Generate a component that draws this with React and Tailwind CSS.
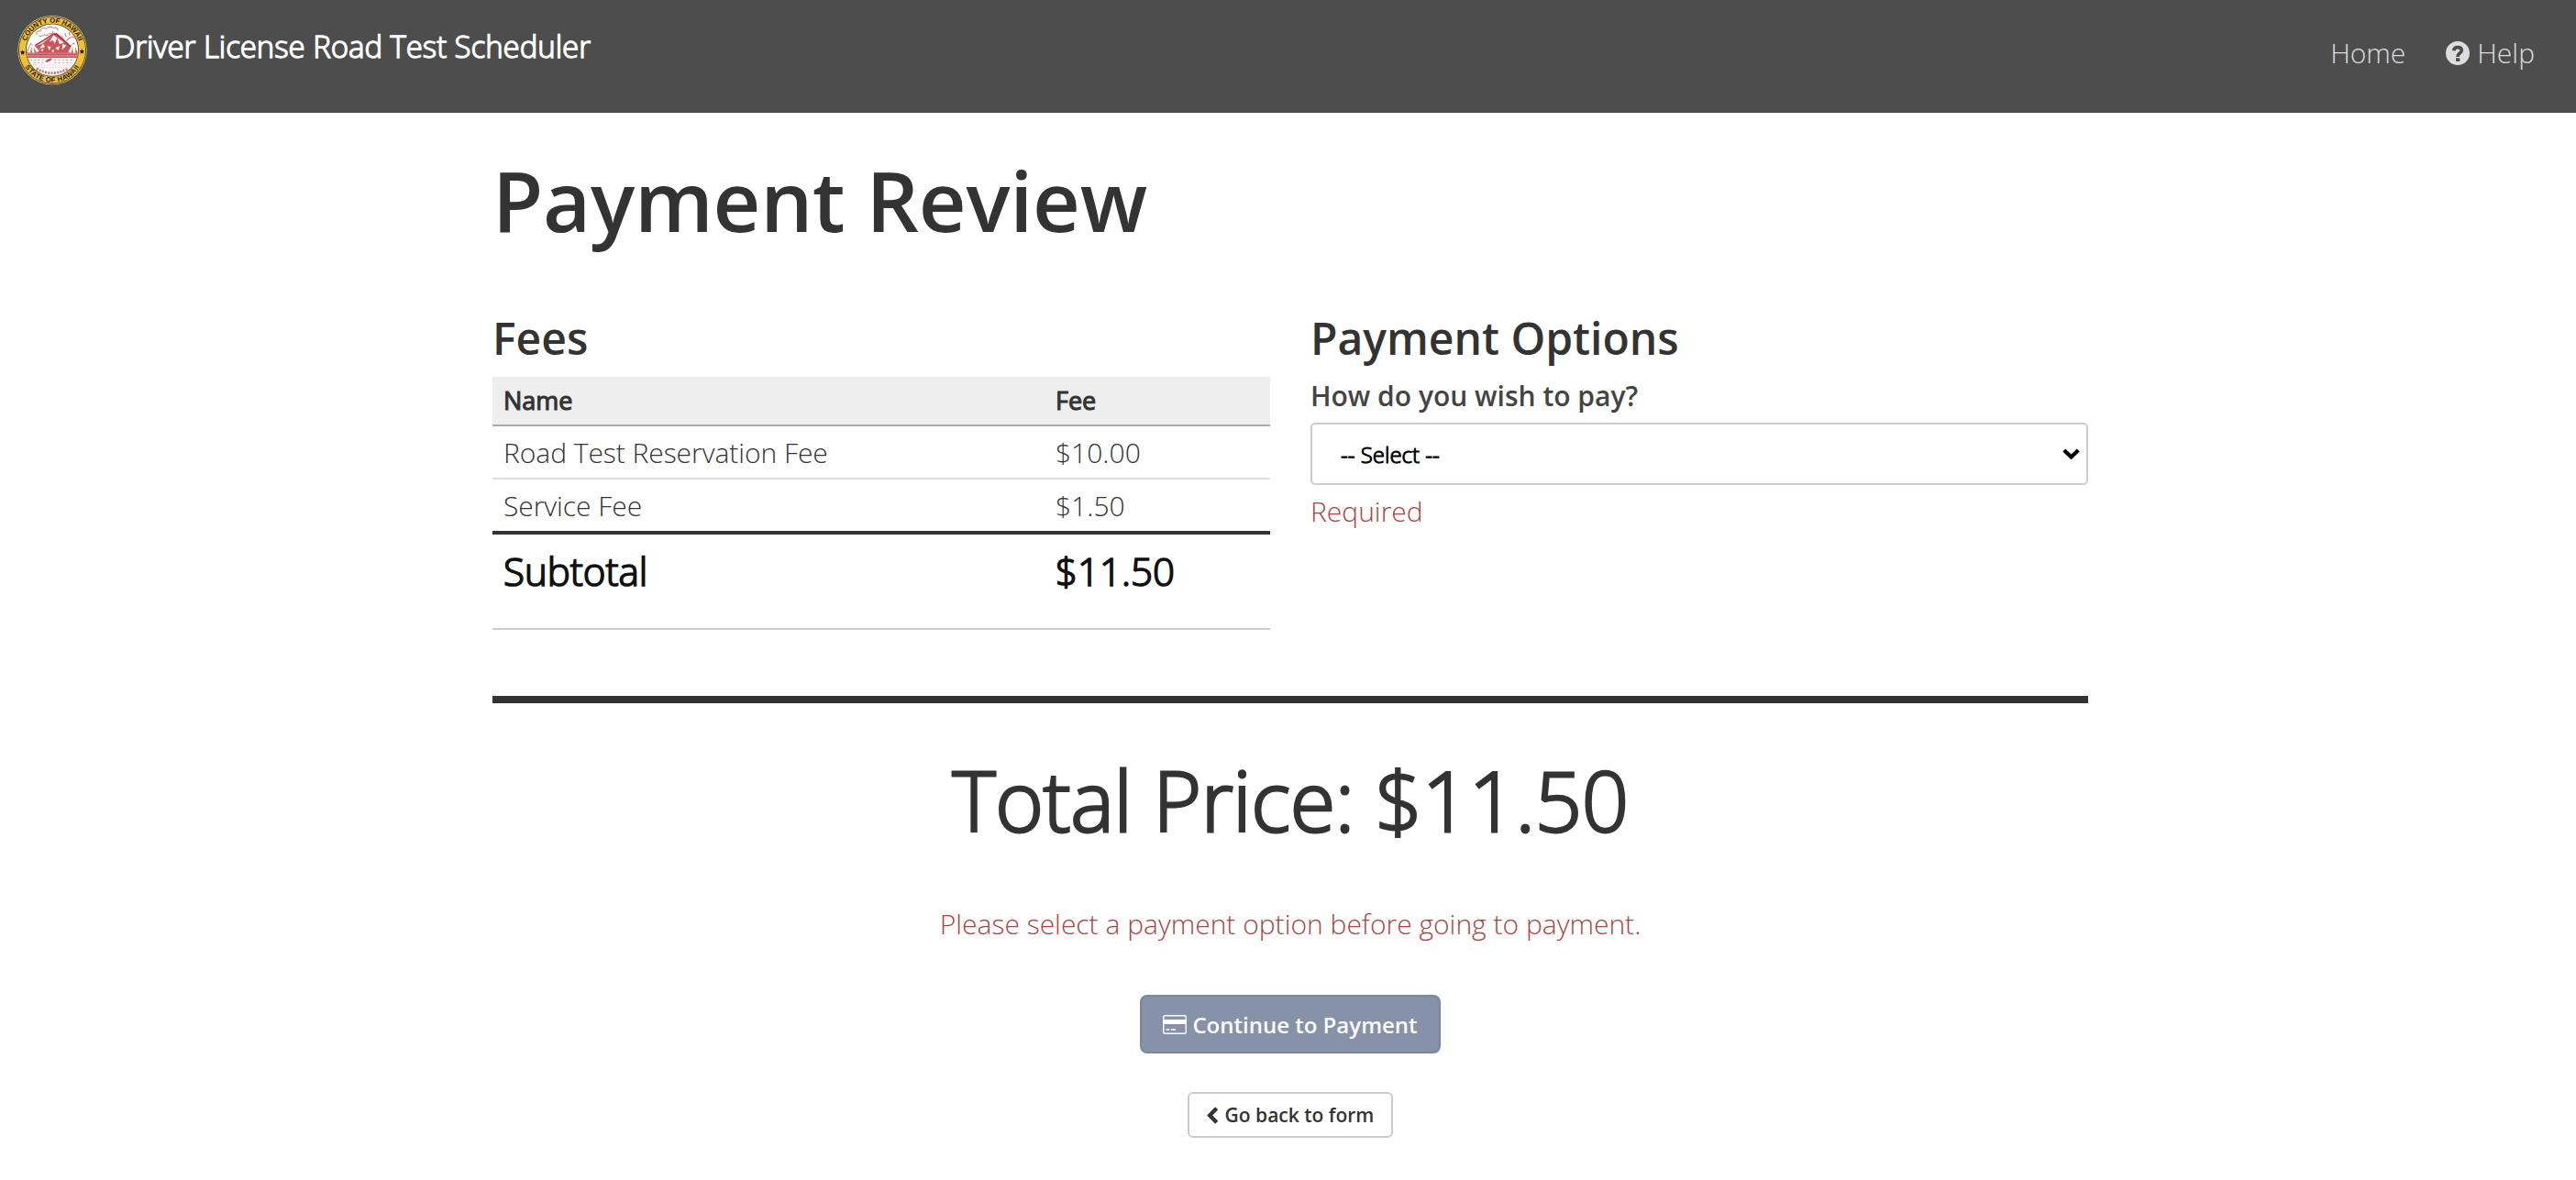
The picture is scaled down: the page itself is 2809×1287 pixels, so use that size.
function CountySeal() {
  return (
    <svg className="block h-[76px] w-[76px]" viewBox="0 0 228 228" aria-label="County seal">
      <defs>
        <path id="seal-top" d="M 24 113 A 90 90 0 0 1 204 113" />
        <path id="seal-bottom" d="M 9 113 A 105 105 0 0 0 219 113" />
        <clipPath id="seal-clip">
          <circle cx="114" cy="113" r="84" />
        </clipPath>
      </defs>
      <circle cx="114" cy="113" r="113" fill="#f0d684" />
      <circle cx="114" cy="113" r="111" fill="#3a3010" />
      <circle cx="114" cy="113" r="108.5" fill="#efbf35" />
      <circle cx="114" cy="113" r="87" fill="#5a4a22" />
      <circle cx="114" cy="113" r="84.5" fill="#fff" />
      <g clipPath="url(#seal-clip)" fill="none" stroke="#c8464a" strokeWidth="2.4">
        <path d="M64 62c-5-8 4-14 10-10 2-12 14-14 20-8 4-8 18-10 24-3 7-4 16 1 14 8M70 66c6 3 14 1 17-4 6 4 14 3 17-3 8 3 13-3 12-8" />
        <path d="M26 126 44 90l14 10 22-8 40-32 12 0 30 30 12 8 10-10 20 38z" fill="#cd555a" stroke="none" />
        <path d="M58 98 84 82 118 60l10 0 34 30 12 12" stroke="#b3262c" strokeWidth="4" />
        <path d="M118 64 104 86l12-6 6 12 8-20 8 22 14-6z" fill="#fff" stroke="none" />
        <path d="M44 94 32 120l10 2 4-20 2 20 8 0-4-20 10 18 10-4-18-20zM180 92l-14 28 10 2 5-20 1 20 8 0-1-20 7 18 8-4-12-20zM84 92l-12 16 18-5zM148 92l12 6-14 14zM98 100l12 2-6 12zM124 106l14-6-4 14zM76 112l10-4-4 10zM110 116l10-6-2 10z" fill="#fff" stroke="none" />
        <path d="M160 84a22 22 0 0 1 38-4M152 76l-8-10M160 70l-5-13M171 66l-1-12M182 68l5-12M190 74l10-8" />
        <rect x="24" y="122" width="180" height="16" fill="#dc8083" stroke="none" />
        <path d="M24 127h180M24 136h180" strokeWidth="3" />
        <path d="M92 150c8-2 10-9 20-8M96 150l14-6" strokeWidth="5" />
        <path d="M40 146h46m34 0h66M52 154h40m28 0h58" strokeWidth="1.6" strokeDasharray="8 5" />
        <path d="M50 162h128M60 170h108" strokeWidth="1.6" strokeDasharray="5 4" stroke="#d98a8c" />
        <path d="M62 174q52 28 104 0" stroke="#cf6a6d" strokeWidth="8" strokeDasharray="6 4" />
      </g>
      <g fill="#1d1808" fontFamily="'Liberation Sans', sans-serif" fontWeight="700" fontSize="23">
        <text textAnchor="middle">
          <textPath href="#seal-top" startOffset="50%">COUNTY OF HAWAII</textPath>
        </text>
        <text textAnchor="middle" letterSpacing="1">
          <textPath href="#seal-bottom" startOffset="50%">STATE OF HAWAII</textPath>
        </text>
        <path d="m17 112 2 5 6 1-4 4 1 6-5-3-5 3 1-6-4-4 6-1zM211 109l2 5 6 1-4 4 1 6-5-3-5 3 1-6-4-4 6-1z" />
      </g>
    </svg>
  );
}

function QuestionIcon() {
  return (
    <svg className="h-[26px] w-[26px]" viewBox="0 0 78 78" aria-hidden="true">
      <circle cx="39" cy="39" r="39" fill="#ddd" />
      <path d="M26 31c1-7 5-11 13-11 8 0 13 4 13 10 0 9-13 8-13 21" fill="none" stroke="#4d4d4d" strokeWidth="11" />
      <rect x="33" y="55" width="13" height="11" fill="#4d4d4d" />
    </svg>
  );
}

function CardIcon() {
  return (
    <svg className="h-[21px] w-[26px]" viewBox="0 0 26 21" aria-hidden="true">
      <rect x="0.75" y="0.75" width="24.5" height="19.5" rx="1.5" fill="none" stroke="#fff" strokeWidth="1.4" />
      <path d="M0.5 5h25v5H0.5zM3.5 15.3h3.7v1.5H3.5zM9 15.3h5v1.5H9z" fill="#fff" />
    </svg>
  );
}

const fees = [
  { name: "Road Test Reservation Fee", fee: "$10.00" },
  { name: "Service Fee", fee: "$1.50" },
];

export default function App() {
  return (
    <div className="min-h-[1287px] w-full bg-white font-['Open_Sans','Noto_Sans',sans-serif] font-light text-[30px] text-[#333]">
      <header className="flex h-[123px] items-start justify-between border-b border-[#444] bg-[#4d4d4d] pr-[45px] pl-[19px]">
        <div className="flex">
          <div className="pt-[17px]">
            <CountySeal />
          </div>
          <span className="ml-[29px] text-[33px] leading-[101px] tracking-[-0.06px] whitespace-nowrap text-white [-webkit-text-stroke:1.3px_#fff]">
            Driver License Road Test Scheduler
          </span>
        </div>
        <nav className="flex leading-[115px] text-[#ddd]">
          <a>Home</a>
          <a className="ml-[44px] flex items-center">
            <QuestionIcon />
            <span className="ml-[8px]">Help</span>
          </a>
        </nav>
      </header>

      <main className="ml-[537px] w-[1740px]">
        <h1 className="pt-[45px] text-[90px] leading-[100px] font-semibold tracking-[-0.25px]">Payment Review</h1>

        <div className="mt-[75px] grid grid-cols-2 gap-[44px]">
          <section>
            <h2 className="text-[48px] leading-[52px] font-semibold">Fees</h2>
            <div className="mt-[16px]">
              <div className="grid h-[54px] grid-cols-[602px_1fr] border-b-2 border-[#aaa] bg-[#eee] px-[12px] text-[27px] leading-[52px] font-normal [-webkit-text-stroke:1.1px_#333]">
                <span>Name</span>
                <span>Fee</span>
              </div>
              {fees.map((row, i) => (
                <div
                  key={row.name}
                  className={
                    i === fees.length - 1
                      ? "grid h-[56px] grid-cols-[602px_1fr] px-[12px] leading-[58px]"
                      : "grid h-[58px] grid-cols-[602px_1fr] border-b-2 border-[#ddd] px-[12px] leading-[58px]"
                  }
                >
                  <span className="tracking-[-0.05px]">{row.name}</span>
                  <span>{row.fee}</span>
                </div>
              ))}
              <div className="grid h-[108px] grid-cols-[602px_1fr] border-t-4 border-b-2 border-t-[#333] border-b-[#ccc] px-[12px] text-[42px] leading-[80px] text-[#111] [-webkit-text-stroke:1.7px_#111]">
                <span>Subtotal</span>
                <span>$11.50</span>
              </div>
            </div>
          </section>

          <section>
            <h2 className="text-[48px] leading-[52px] font-semibold">Payment Options</h2>
            <div className="mt-[16px] leading-[42px] font-semibold text-[#444]">How do you wish to pay?</div>
            <div className="mt-[8px] flex h-[68px] items-center justify-between rounded-[5px] border-2 border-[#ccc] bg-white pr-[7px] pl-[31px] text-black">
              <span className="pt-[2px] text-[24px] leading-[32px] [-webkit-text-stroke:1px_#000]">-- Select --</span>
              <svg className="h-[12px] w-[19px]" viewBox="0 0 19 12" aria-hidden="true">
                <path d="M1.8 2 9.5 9.5 17.2 2" fill="none" stroke="#000" strokeWidth="4.2" />
              </svg>
            </div>
            <div className="mt-[9px] leading-[40px] text-[#a94442]">Required</div>
          </section>
        </div>

        <div className="mt-[72px] h-[8px] bg-[#333]" />

        <div className="flex flex-col items-center">
          <div className="mt-[55px] text-[90px] leading-[100px] tracking-[-0.4px] whitespace-nowrap [-webkit-text-stroke:2.8px_#333]">
            Total Price: $11.50
          </div>
          <div className="mt-[64px] leading-[44px] text-[#a94442]">
            Please select a payment option before going to payment.
          </div>
          <button className="mt-[55px] flex h-[64px] w-[328px] items-center justify-center rounded-[8px] border-2 border-[#7b889c] bg-[#8592a8] text-[24px] font-semibold text-white">
            <CardIcon />
            <span className="ml-[6px] pt-[2px]">Continue to Payment</span>
          </button>
          <button className="mt-[42px] flex h-[50px] w-[224px] items-center justify-center rounded-[6px] border-2 border-[#ccc] bg-white text-[21px] font-semibold">
            <svg className="h-[19px] w-[13px]" viewBox="0 0 13 19" aria-hidden="true">
              <path d="M10.7 1.8 3.2 9.5l7.5 7.7" fill="none" stroke="#333" strokeWidth="4.4" />
            </svg>
            <span className="ml-[7px] pt-[2px]">Go back to form</span>
          </button>
        </div>
      </main>
    </div>
  );
}
